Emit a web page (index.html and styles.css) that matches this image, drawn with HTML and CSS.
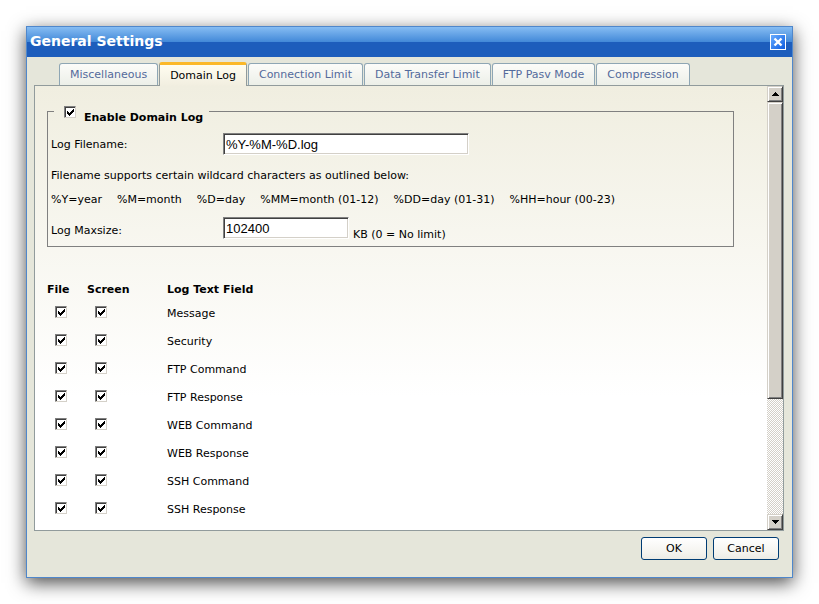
FILE: index.html
```html
<!DOCTYPE html>
<html lang="en">
<head>
    <meta charset="UTF-8">
    <meta name="viewport" content="width=device-width, initial-scale=1.0">
    <title>General Settings</title>
    <link rel="stylesheet" href="styles.css">
</head>
<body>
    <div class="dialog">
        <div class="titlebar">
            <h1>General Settings</h1>
            <button type="button" class="close" aria-label="Close">
                <svg width="14" height="14" viewBox="0 0 14 14"><path d="M3.5 3.5l7 7M10.5 3.5l-7 7" stroke="#fff" stroke-width="2.4"/></svg>
            </button>
        </div>

        <div class="tabs">
            <button type="button" class="tab">Miscellaneous</button>
            <button type="button" class="tab active">Domain Log</button>
            <button type="button" class="tab">Connection Limit</button>
            <button type="button" class="tab">Data Transfer Limit</button>
            <button type="button" class="tab">FTP Pasv Mode</button>
            <button type="button" class="tab">Compression</button>
        </div>

        <div class="panel">
            <div class="content">
                <fieldset>
                    <legend>
                        <input type="checkbox" id="enable-log" checked>
                        <label for="enable-log">Enable Domain Log</label>
                    </legend>
                    <div class="field">
                        <label for="filename">Log Filename:</label>
                        <input type="text" id="filename" value="%Y-%M-%D.log">
                    </div>
                    <p>Filename supports certain wildcard characters as outlined below:</p>
                    <p class="wildcards">
                        <span>%Y=year</span>
                        <span>%M=month</span>
                        <span>%D=day</span>
                        <span>%MM=month (01-12)</span>
                        <span>%DD=day (01-31)</span>
                        <span>%HH=hour (00-23)</span>
                    </p>
                    <div class="field maxsize">
                        <label for="maxsize">Log Maxsize:</label>
                        <input type="text" id="maxsize" value="102400">
                        <span class="unit">KB (0 = No limit)</span>
                    </div>
                </fieldset>

                <table>
                    <thead>
                        <tr><th class="col-file">File</th><th class="col-screen">Screen</th><th>Log Text Field</th></tr>
                    </thead>
                    <tbody>
                        <tr>
                            <td><input type="checkbox" aria-label="Message to file" checked></td>
                            <td><input type="checkbox" aria-label="Message to screen" checked></td>
                            <td>Message</td>
                        </tr>
                        <tr>
                            <td><input type="checkbox" aria-label="Security to file" checked></td>
                            <td><input type="checkbox" aria-label="Security to screen" checked></td>
                            <td>Security</td>
                        </tr>
                        <tr>
                            <td><input type="checkbox" aria-label="FTP Command to file" checked></td>
                            <td><input type="checkbox" aria-label="FTP Command to screen" checked></td>
                            <td>FTP Command</td>
                        </tr>
                        <tr>
                            <td><input type="checkbox" aria-label="FTP Response to file" checked></td>
                            <td><input type="checkbox" aria-label="FTP Response to screen" checked></td>
                            <td>FTP Response</td>
                        </tr>
                        <tr>
                            <td><input type="checkbox" aria-label="WEB Command to file" checked></td>
                            <td><input type="checkbox" aria-label="WEB Command to screen" checked></td>
                            <td>WEB Command</td>
                        </tr>
                        <tr>
                            <td><input type="checkbox" aria-label="WEB Response to file" checked></td>
                            <td><input type="checkbox" aria-label="WEB Response to screen" checked></td>
                            <td>WEB Response</td>
                        </tr>
                        <tr>
                            <td><input type="checkbox" aria-label="SSH Command to file" checked></td>
                            <td><input type="checkbox" aria-label="SSH Command to screen" checked></td>
                            <td>SSH Command</td>
                        </tr>
                        <tr>
                            <td><input type="checkbox" aria-label="SSH Response to file" checked></td>
                            <td><input type="checkbox" aria-label="SSH Response to screen" checked></td>
                            <td>SSH Response</td>
                        </tr>
                    </tbody>
                </table>
            </div>

            <div class="scrollbar">
                <button type="button" class="arrow" aria-label="Scroll up">
                    <svg width="7" height="4" viewBox="0 0 7 4" shape-rendering="crispEdges"><path d="M3 0h1v1h1v1h1v1h1v1H0V3h1V2h1V1h1z"/></svg>
                </button>
                <div class="thumb"></div>
                <div class="track"></div>
                <button type="button" class="arrow" aria-label="Scroll down">
                    <svg width="7" height="4" viewBox="0 0 7 4" shape-rendering="crispEdges"><path d="M0 0h7v1H6v1H5v1H4v1H3V3H2V2H1V1H0z"/></svg>
                </button>
            </div>
        </div>

        <div class="buttons">
            <button type="button" class="btn">OK</button>
            <button type="button" class="btn">Cancel</button>
        </div>
    </div>
</body>
</html>
```

FILE: styles.css
```css
* {
    box-sizing: border-box;
}

body {
    margin: 0;
    padding: 26px;
    height: 100vh;
    display: flex;
    background-color: #fff;
    font-family: Verdana, "DejaVu Sans", sans-serif;
    font-size: 11px;
    line-height: 14px;
    color: #000;
}

button {
    font: inherit;
    padding: 0;
    cursor: pointer;
}

.dialog {
    flex: 1;
    min-width: 0;
    display: flex;
    flex-direction: column;
    background-color: #e5e6da;
    border: 1px solid #4f87cb;
    box-shadow: 0 5px 17px rgba(0, 0, 0, 0.7);
}

/* title bar */
.titlebar {
    display: flex;
    align-items: center;
    justify-content: space-between;
    height: 30px;
    padding: 0 6px 0 3px;
    background: linear-gradient(#86bdf3, #4288d8 50%, #1d5dbc 50%, #1d5dbc);
}

h1 {
    margin: 0;
    padding-bottom: 2px;
    font-size: 14px;
    line-height: 18px;
    color: #fff;
}

.close {
    display: flex;
    width: 16px;
    height: 16px;
    border: 1px solid #fff;
    background: linear-gradient(135deg, #69adff, #0c5be0);
}

/* tabs */
.tabs {
    display: flex;
    align-items: flex-end;
    gap: 1px;
    height: 28px;
    padding-left: 32px;
}

.tab {
    height: 22px;
    padding: 1px 10px 0;
    border: 1px solid #8ea6b4;
    border-bottom: none;
    border-radius: 3px 3px 0 0;
    background: linear-gradient(#fcfcf9, #ecefe8);
    color: #536a9b;
}

.tab.active {
    height: 24px;
    margin-bottom: -1px;
    padding-top: 0;
    border-color: #919b9c;
    border-top: 3px solid #fbb829;
    background: linear-gradient(#fffdf0, #f1eee0);
    color: #000;
    z-index: 1;
}

/* scrolling panel */
.panel {
    flex: 1;
    min-height: 0;
    display: flex;
    margin: 0 8px 0 7px;
    border: 1px solid #919b9c;
    background: linear-gradient(#f0eee0, #fff 70%);
}

.content {
    flex: 1;
    overflow: hidden;
    padding: 11px 33px 0 12px;
}

fieldset {
    margin: 0;
    padding: 0 3px 4px;
    border: 1px solid #808080;
}

legend {
    display: flex;
    align-items: flex-end;
    gap: 8px;
    height: 28px;
    margin-left: 3px;
    padding: 0 6px 0 10px;
    font-weight: bold;
}

legend input[type="checkbox"] {
    margin-bottom: 7px;
}

.field {
    display: flex;
    align-items: center;
    margin-top: 8px;
}

.field label {
    width: 172px;
    padding-top: 2px;
}

input[type="text"] {
    width: 246px;
    height: 22px;
    padding: 0 2px;
    border: 1px solid;
    border-color: #808080 #fff #fff #808080;
    box-shadow: inset 1px 1px 0 #404040, inset -1px -1px 0 #d4d0c8;
    background-color: #fff;
    font-family: Arial, "Liberation Sans", sans-serif;
    font-size: 13px;
}

.maxsize {
    height: 25px;
    margin-top: 5px;
}

.maxsize input[type="text"] {
    align-self: flex-start;
    width: 126px;
}

.unit {
    align-self: flex-end;
    margin-left: 4px;
}

p {
    margin: 0;
    line-height: 24px;
}

.field + p {
    margin-top: 9px;
}

.wildcards {
    display: flex;
    gap: 15px;
}

input[type="checkbox"] {
    appearance: none;
    display: block;
    width: 12px;
    height: 12px;
    margin: 0;
    border: 1px solid;
    border-color: #808080 #d4d0c8 #d4d0c8 #808080;
    box-shadow: inset 1px 1px 0 #404040;
    background-color: #fff;
}

/* pixel tick, like the classic Windows one */
input[type="checkbox"]:checked {
    background-image: url("data:image/svg+xml,%3Csvg xmlns='http://www.w3.org/2000/svg' width='10' height='10' shape-rendering='crispEdges'%3E%3Cpath d='M2 4h1v1h1v1h1V5h1V4h1V3h1V2h1v3H8v1H7v1H6v1H5v1H4V8H3V7H2z'/%3E%3C/svg%3E");
}

/* log table */
table {
    width: 100%;
    margin-top: 32px;
    border-collapse: collapse;
}

th,
td {
    padding: 2px 0 0;
    text-align: left;
}

th {
    height: 20px;
}

td {
    height: 28px;
}

.col-file {
    width: 40px;
}

.col-screen {
    width: 80px;
}

td input[type="checkbox"] {
    margin: 0 0 4px 8px;
}

/* scrollbar */
.scrollbar {
    display: flex;
    flex-direction: column;
    width: 16px;
}

.arrow,
.thumb {
    border: 1px solid;
    border-color: #d4d0c8 #404040 #404040 #d4d0c8;
    box-shadow: inset 1px 1px 0 #fff, inset -1px -1px 0 #808080;
    background-color: #d4d0c8;
}

.arrow {
    display: flex;
    align-items: center;
    justify-content: center;
    height: 16px;
}

.thumb {
    flex: 296;
}

.track {
    flex: 116;
    background: repeating-conic-gradient(#d4d0c8 0 25%, #fff 0 50%) 0 0 / 2px 2px;
}

/* footer */
.buttons {
    display: flex;
    justify-content: flex-end;
    gap: 6px;
    padding: 6px 13px 17px;
}

.btn {
    min-width: 66px;
    height: 23px;
    padding: 1px 13px 0;
    border: 1px solid #003c74;
    border-radius: 3px;
    background: linear-gradient(#fff, #f4f3ee 70%, #ecebe5);
}
```
